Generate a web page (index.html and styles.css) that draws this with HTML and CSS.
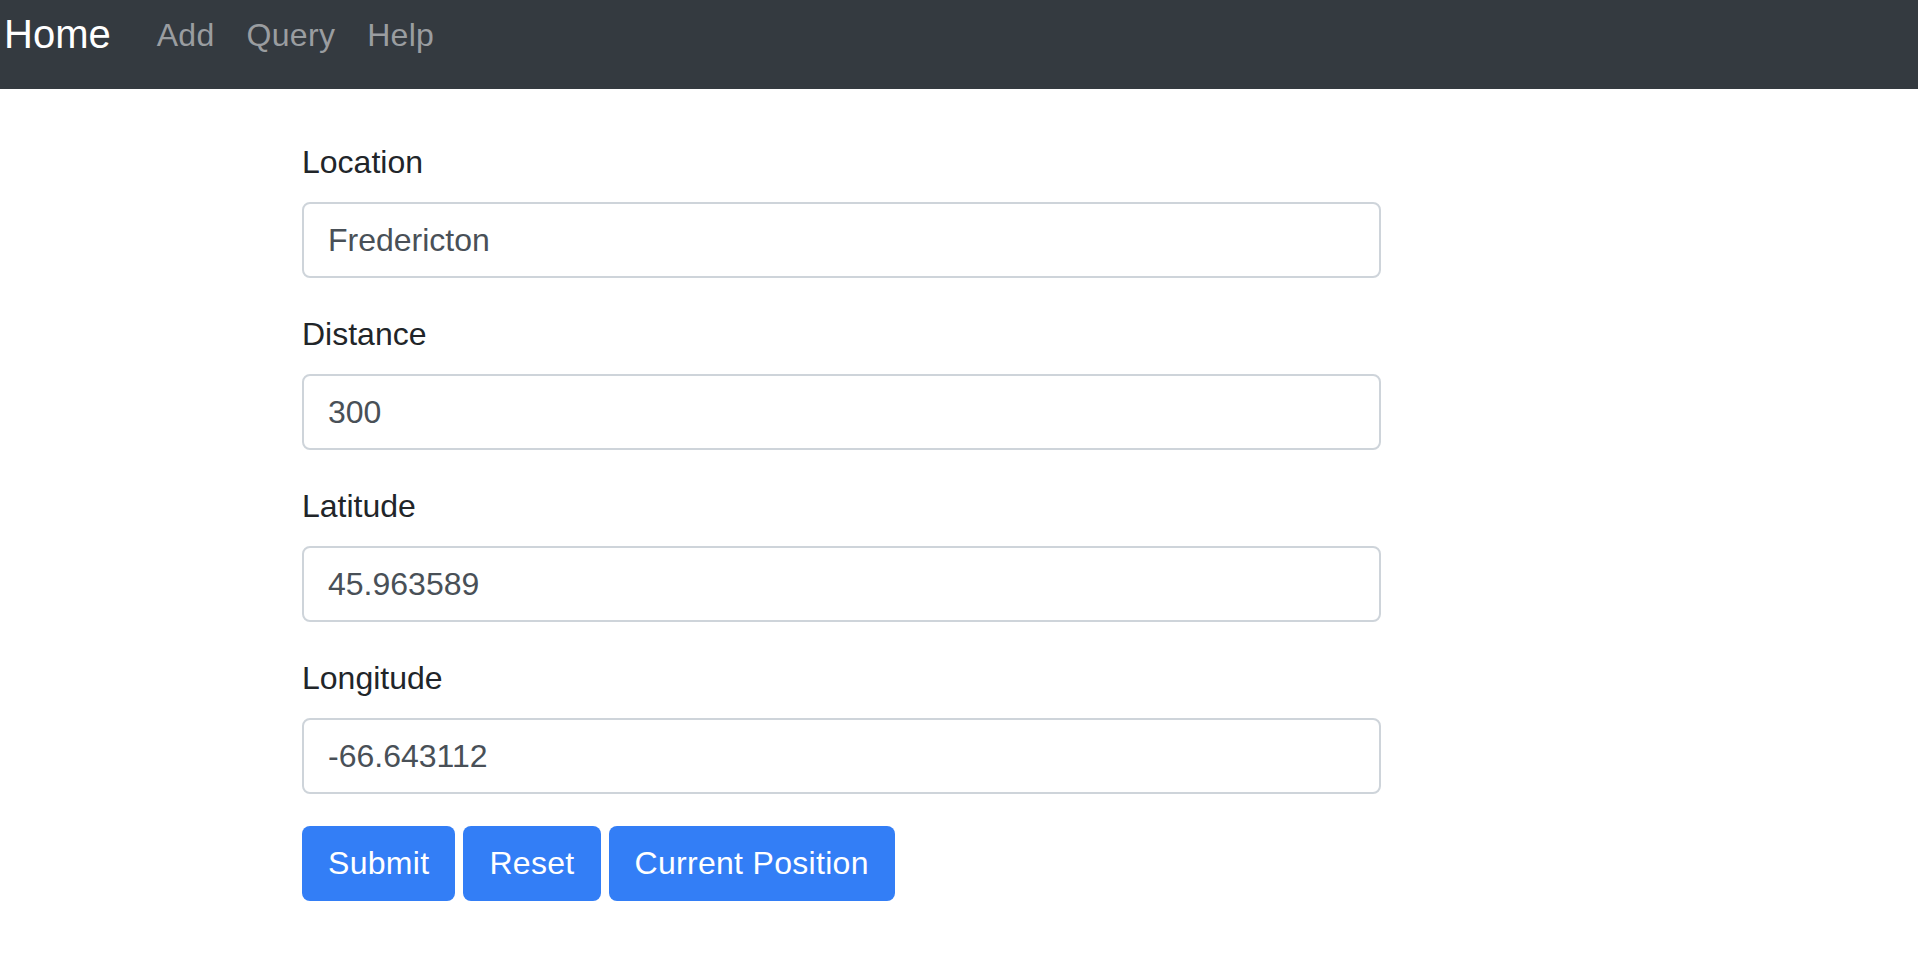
FILE: index.html
```html
<!DOCTYPE html>
<html lang="en">
<head>
<meta charset="utf-8">
<title>Home</title>
<link rel="stylesheet" href="styles.css">
</head>
<body>
<nav class="navbar">
  <a class="brand" href="#">Home</a>
  <a class="nav-link" href="#">Add</a>
  <a class="nav-link" href="#">Query</a>
  <a class="nav-link" href="#">Help</a>
</nav>
<main class="container">
  <form class="form">
    <div class="form-group">
      <label class="label" for="loc">Location</label>
      <input class="input" id="loc" type="text" value="Fredericton">
    </div>
    <div class="form-group">
      <label class="label" for="dist">Distance</label>
      <input class="input" id="dist" type="text" value="300">
    </div>
    <div class="form-group">
      <label class="label" for="lat">Latitude</label>
      <input class="input" id="lat" type="text" value="45.963589">
    </div>
    <div class="form-group">
      <label class="label" for="lng">Longitude</label>
      <input class="input" id="lng" type="text" value="-66.643112">
    </div>
    <div class="buttons">
      <button class="btn" type="button">Submit</button>
      <button class="btn" type="button">Reset</button>
      <button class="btn" type="button">Current Position</button>
    </div>
  </form>
</main>
</body>
</html>
```
FILE: styles.css
```css
* { box-sizing: border-box; }

html, body {
  margin: 0;
  padding: 0;
  background: #ffffff;
  font-family: "Liberation Sans", Arial, "Helvetica Neue", sans-serif;
  color: #212529;
}

.navbar {
  display: flex;
  align-items: flex-start;
  height: 89px;
  padding: 4px 0 0 4px;
  background: #343a40;
}

.brand {
  font-size: 40px;
  line-height: 60px;
  color: #ffffff;
  text-decoration: none;
  margin-right: 30px;
}

.nav-link {
  margin-top: 7px;
  font-size: 32px;
  line-height: 48px;
  padding: 0 16px;
  letter-spacing: 0.3px;
  color: #9a9da0;
  text-decoration: none;
}

.container {
  padding: 49px 0 0 302px;
}

.form {
  width: 1079px;
}

.form-group {
  display: flex;
  flex-direction: column;
  margin-bottom: 32px;
}

.label {
  font-size: 32px;
  line-height: 48px;
  margin-bottom: 16px;
  color: #212529;
}

.input {
  height: 76px;
  width: 100%;
  padding: 0 24px;
  font-family: inherit;
  font-size: 32px;
  color: #495057;
  background: #ffffff;
  border: 2px solid #ced4da;
  border-radius: 8px;
  outline: none;
}

.buttons {
  display: flex;
  gap: 8px;
}

.btn {
  height: 75px;
  padding: 0 26px;
  font-family: inherit;
  font-size: 32px;
  letter-spacing: 0.3px;
  color: #ffffff;
  background: #337ef6;
  border: none;
  border-radius: 8px;
}
```
